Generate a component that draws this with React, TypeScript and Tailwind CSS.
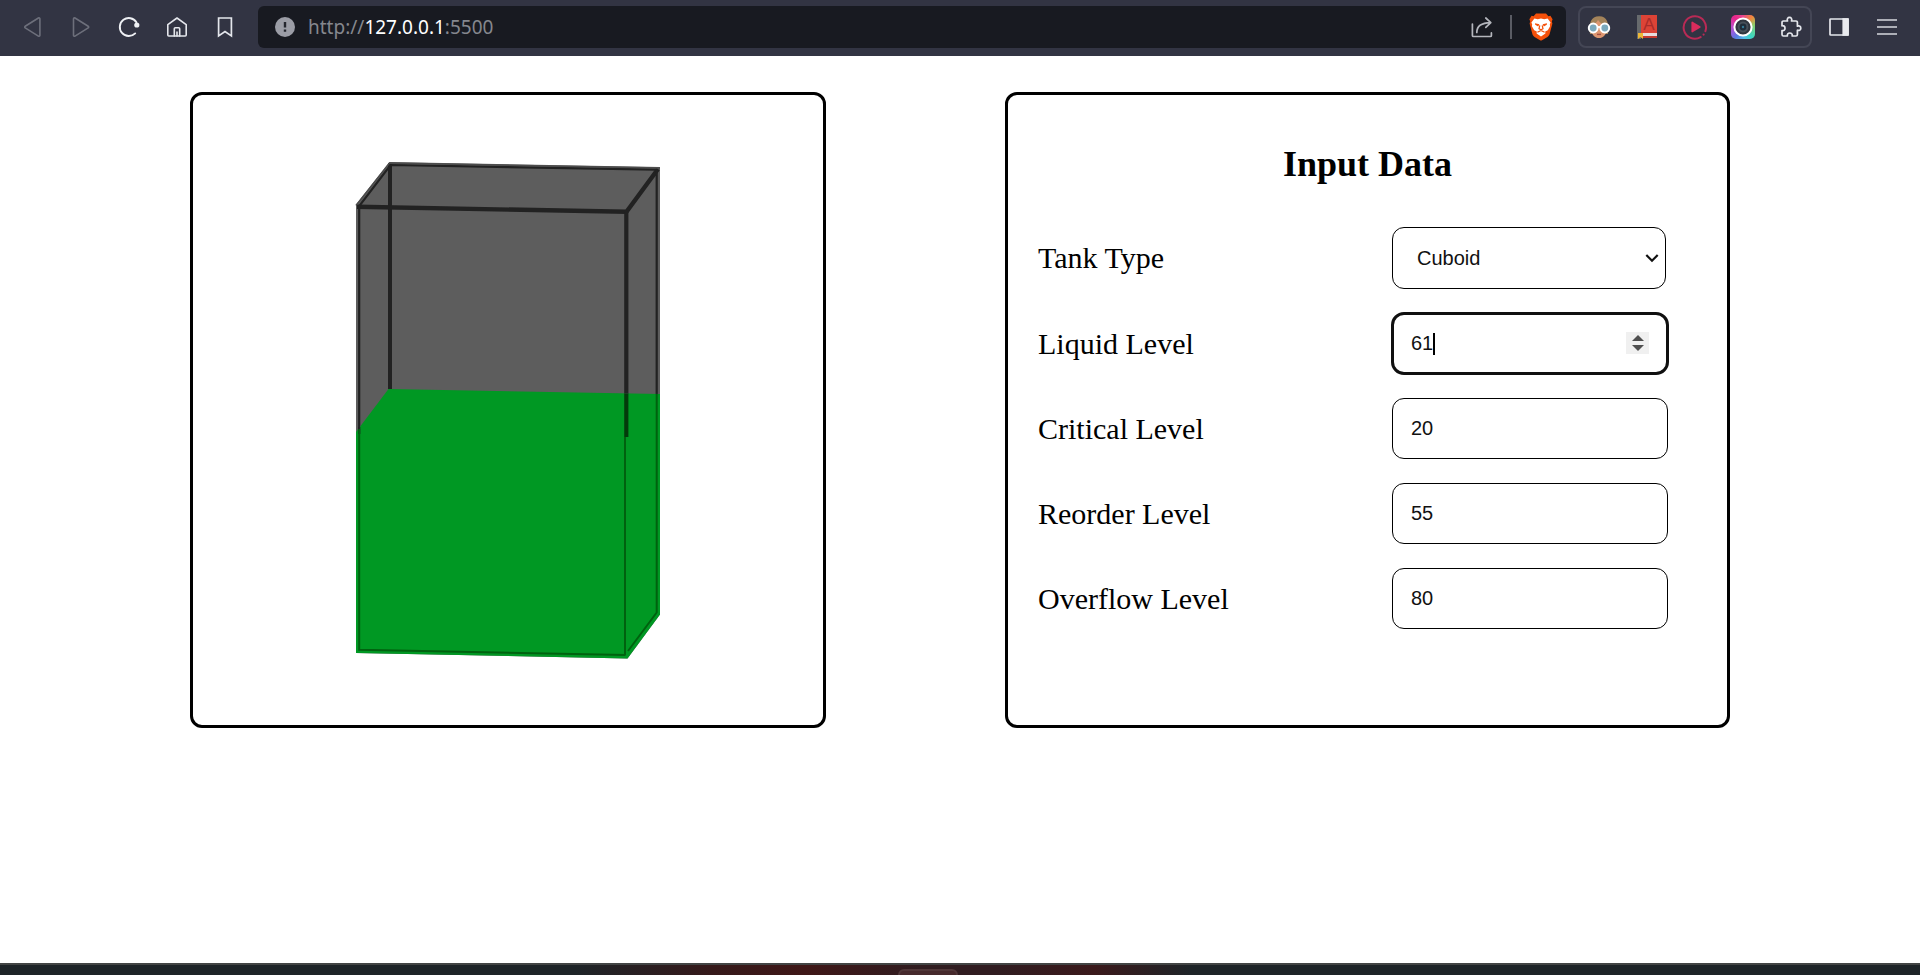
import React, { useState } from "react";

type BarButtonProps = { label: string; children: React.ReactNode };

function BarButton({ label, children }: BarButtonProps) {
  return (
    <button type="button" aria-label={label} className="flex h-12 w-12 shrink-0 items-center justify-center">
      {children}
    </button>
  );
}

const line = {
  width: 24,
  height: 24,
  viewBox: "0 0 24 24",
  fill: "none",
  strokeLinejoin: "round" as const,
  strokeLinecap: "round" as const,
};

function BrowserBar() {
  return (
    <header className="flex h-14 items-center bg-[#323443] pb-0.5 pl-[9px] pr-[9px]">
      <nav className="flex" aria-label="Browser">
        <BarButton label="Back">
          <svg {...line} stroke="#6d6f7b" strokeWidth="1.600">
            <path d="M17.400 3 4.200 11.200a1 1 0 0 0 0 1.700L17.400 21.100a1 1 0 0 0 1.500-.9V3.900a1 1 0 0 0-1.500-.9Z" />
          </svg>
        </BarButton>
        <BarButton label="Forward">
          <svg {...line} stroke="#6d6f7b" strokeWidth="1.600">
            <path d="M6 3 19.200 11.200a1 1 0 0 1 0 1.700L6 21.100a1 1 0 0 1-1.500-.9V3.900A1 1 0 0 1 6 3Z" />
          </svg>
        </BarButton>
        <BarButton label="Reload">
          <svg {...line} stroke="#eef0f4" strokeWidth="1.900">
            <path d="M18.200 18.400A9 9 0 1 1 19.400 7.200" />
            <circle cx="19.800" cy="10" r="2.600" fill="#eef0f4" stroke="none" />
          </svg>
        </BarButton>
        <BarButton label="Home">
          <svg {...line} stroke="#e4e6ec" strokeWidth="1.600">
            <path d="M12 3 2.800 9.600V20a1 1 0 0 0 1 1H20.200a1 1 0 0 0 1-1V9.600Z" />
            <path d="M9.300 21v-7.200a1 1 0 0 1 1-1h3.400a1 1 0 0 1 1 1V21M12 17v4" />
          </svg>
        </BarButton>
        <BarButton label="Bookmark">
          <svg {...line} stroke="#e4e6ec" strokeWidth="1.700">
            <path strokeLinejoin="miter" d="M5.600 3h12.800v18L12 16.600 5.600 21Z" />
          </svg>
        </BarButton>
      </nav>

      <div className="ml-[9px] flex h-[42px] flex-1 items-center rounded-md bg-[#181a21] pl-4 pr-3">
        <svg width="22" height="22" viewBox="0 0 22 22" aria-hidden="true">
          <circle cx="11" cy="11" r="10" fill="#9b9da6" />
          <path d="M11 6v5.600M11 13.600v2.200" stroke="#24262e" strokeWidth="2.400" />
        </svg>
        <p className="ml-3 flex-1 font-['Noto_Sans',sans-serif] text-[19px] leading-6 text-[#85878e]">
          http://<span className="text-white">127.0.0.1</span>:5500
        </p>
        <button type="button" aria-label="Share">
          <svg {...line} stroke="#b4b6bd" strokeWidth="1.700">
            <path d="M2.400 9v11.500a1 1 0 0 0 1 1h17a1 1 0 0 0 1-1v-2.600" />
            <path d="M6.800 17.400C6.800 11.600 11 7.800 20.600 7.600M15.800 3l5 4.600-5 4.800" />
          </svg>
        </button>
        <span className="mx-4 h-6 w-0.5 bg-[#5a5c64]" />
        <button type="button" aria-label="Shields">
          <svg width="26" height="28" viewBox="0 0 26 28">
            <path
              d="M8 .6h10l2.400 2.600 2-.4 2.200 3.400-.8 2.200.6 2-2.700 10.400c-.3 1.300-1.100 2.300-2.200 3.100L14 27.300q-1 .5-2 0l-5.500-3.400c-1.100-.8-1.900-1.800-2.200-3.100L1.600 10.400l.6-2-.8-2.200 2.200-3.400 2 .4Z"
              fill="#f4500a"
            />
            <path
              d="m6.400 5.400 3.400.8 3.200-.8 3.200.8 3.400-.8 3 4.200-.8 1.800.3 1.800-2.300 4-2.600 1.200.2 2-4.400 3-4.400-3 .2-2-2.600-1.200-2.300-4 .3-1.800-.8-1.800Z"
              fill="#fff"
            />
            <path
              d="m7 10.200 4.400 1-1.200 2.200-3-1.600ZM19 10.200l-4.400 1 1.200 2.200 3-1.600Z"
              fill="#f4500a"
            />
            <path
              d="M11.800 12.400 11 15.800l2 1 2-1-.8-3.400M9.400 19.200l3.600-1.800 3.600 1.800"
              fill="none"
              stroke="#f4500a"
              strokeWidth="1.200"
            />
          </svg>
        </button>
      </div>

      <div className="ml-3 flex h-[42px] items-center rounded-lg border-2 border-[#444655]">
        <div className="-mx-[5px] flex">
          <BarButton label="Reading extension">
            <svg width="24" height="24" viewBox="0 0 24 24">
              <path d="M3 19C1.600 8 4 1.400 12 1.200S22.400 8 21 19Z" fill="#a3835a" />
              <path d="M4.400 11C8 9 10 7 11 5c2 3 5 5 8.600 6v3.400c0 5-3.600 8.600-7.600 8.600s-7.600-3.600-7.600-8.600Z" fill="#dc9670" />
              <path d="M10 19.400h4" stroke="#a24e42" strokeWidth="1.400" />
              <circle cx="6.200" cy="13" r="4.400" fill="#7ba9bd" stroke="#fff" strokeWidth="2" />
              <circle cx="17.800" cy="13" r="4.400" fill="#7ba9bd" stroke="#fff" strokeWidth="2" />
              <path d="M10.600 12h2.800" stroke="#fff" strokeWidth="1.800" />
            </svg>
          </BarButton>
          <BarButton label="Dictionary">
            <svg width="24" height="26" viewBox="0 0 24 26">
              <path d="M2 1h4v24H2z" fill="#676a6d" />
              <path d="M6 1h16v18H6z" fill="#dc4336" />
              <path d="M6 19h16v3H6z" fill="#e8dcdc" />
              <path d="M6 22h16v2H6z" fill="#c63a30" />
              <text x="14" y="16" textAnchor="middle" fontSize="17" fontFamily="Liberation Sans, sans-serif" fill="#a82c2a">
                A
              </text>
              <path d="M3 19h5v6l-2.500-2L3 25z" fill="#eeb837" />
            </svg>
          </BarButton>
          <BarButton label="Video player">
            <svg width="26" height="26" viewBox="0 0 26 26">
              <path d="M18.600 23.100A11.200 11.200 0 1 1 23.400 17.200" fill="none" stroke="#b92a55" strokeWidth="2" strokeLinecap="round" />
              <circle cx="21.600" cy="20.600" r="1.100" fill="#b92a55" />
              <path d="M9.400 8.400v9.200a.8.8 0 0 0 1.200.7l7.600-4.600a.8.8 0 0 0 0-1.400l-7.600-4.600a.8.8 0 0 0-1.200.7Z" fill="#d92c5c" />
            </svg>
          </BarButton>
          <BarButton label="Camera">
            <span className="flex h-6 w-6 items-center justify-center rounded-[5px] bg-[conic-gradient(from_0deg,#e8468c_0%,#f0883c_12%,#8ccf6a_22%,#3ed6c0_38%,#4fbfe8_48%,#5a7ae0_60%,#8c62e0_66%,#c24cc8_76%,#e6268c_88%,#e8468c_100%)]">
              <svg width="22" height="22" viewBox="0 0 22 22">
                <circle cx="11" cy="11" r="8.600" fill="#30363f" stroke="#fff" strokeWidth="2" />
                <circle cx="11" cy="11" r="5.400" fill="#46505a" />
                <circle cx="11" cy="11" r="3.400" fill="#1f2c38" />
                <circle cx="11" cy="11" r="1.200" fill="#347896" />
              </svg>
            </span>
          </BarButton>
          <BarButton label="Extensions">
            <svg {...line} stroke="#e4e6ec" strokeWidth="1.700">
              <path d="M3 7.400a1.400 1.400 0 0 1 1.400-1.400H8.500C7.700 3.800 8.900 2.400 10.500 2.400S13.300 3.800 12.500 6H17a1.400 1.400 0 0 1 1.400 1.400v3.800c2-.8 3.400.4 3.400 2s-1.400 2.800-3.400 2v4.400a1.400 1.400 0 0 1-1.400 1.400H13.200c.4-2-.8-3-2.400-3s-2.800 1-2.400 3H4.400A1.400 1.400 0 0 1 3 19.600v-4c2 .4 3-.8 3-2.400s-1-2.800-3-2.400Z" />
            </svg>
          </BarButton>
        </div>
      </div>
      <div className="flex pl-[3px]">
        <BarButton label="Side panel">
          <svg width="22" height="20" viewBox="0 0 22 20">
            <rect x="2" y="2" width="18" height="16" rx="0.600" fill="none" stroke="#e4e6ec" strokeWidth="1.700" />
            <path d="M14.400 1.200H20.800V18.800H14.400z" fill="#e9eaee" />
          </svg>
        </BarButton>
        <BarButton label="Menu">
          <svg width="22" height="18" viewBox="0 0 22 18">
            <path d="M1 2h20M1 9h20M1 16h20" stroke="#d6d8de" strokeWidth="1.600" />
          </svg>
        </BarButton>
      </div>
    </header>
  );
}

function Tank() {
  return (
    <svg viewBox="193 95 630 630" className="block h-auto w-full" role="img" aria-label="Cuboid tank">
      <path d="M356 204.500 389.500 162 660 167V614.500L627.500 658.500 356 653Z" fill="#5d5d5d" />
      <g fill="none" stroke="#222">
        <path d="M390 163V389" strokeWidth="4" />
        <path d="M357 206.700 626.500 211.800 658 169" strokeWidth="4.400" />
        <path d="M359.200 432V206L390.500 165 656.700 169.700V394" strokeWidth="2.200" />
      </g>
      <path d="M356 204.500 389.500 162 660 167" transform="translate(0 1)" fill="none" stroke="#4c4c4c" strokeWidth="1.500" />
      <path d="M356 432 388.500 389 660 394V614.500L627.500 658.500 356 653Z" fill="#009823" />
      <path d="M359.200 427V434" stroke="#222" strokeWidth="2.200" />
      <g fill="none" stroke="#00620f" strokeWidth="2">
        <path d="M359.200 429V649.700L625.500 655" />
        <path d="M625 437V655" />
        <path d="M656.700 394V612.500L628 651" />
      </g>
      <path d="M626.300 393.500V437" stroke="#033b0b" strokeWidth="4.200" />
      <path d="M626.300 212V393.500" stroke="#222" strokeWidth="4.200" />
    </svg>
  );
}

const levels = [
  { id: "liquid", label: "Liquid Level", value: 61 },
  { id: "critical", label: "Critical Level", value: 20 },
  { id: "reorder", label: "Reorder Level", value: 55 },
  { id: "overflow", label: "Overflow Level", value: 80 },
];

function Row({ id, label, children }: { id: string; label: string; children: React.ReactNode }) {
  return (
    <div className="flex items-center justify-between">
      <label htmlFor={id} className="text-[30px] leading-9">
        {label}
      </label>
      <div className="relative w-[276px]">{children}</div>
    </div>
  );
}

function Stepper({ onStep }: { onStep: (delta: number) => void }) {
  return (
    <div className="absolute right-[19px] top-[19px] flex h-[22px] w-[23px] flex-col bg-[#f0f0f0]">
      <button type="button" aria-label="Increase" onClick={() => onStep(1)} className="flex flex-1 items-end justify-center pb-0.5">
        <svg width="12" height="6" viewBox="0 0 12 6">
          <path d="M0 6 6 0l6 6Z" fill="#505050" />
        </svg>
      </button>
      <button type="button" aria-label="Decrease" onClick={() => onStep(-1)} className="flex flex-1 items-start justify-center pt-0.5">
        <svg width="12" height="6" viewBox="0 0 12 6">
          <path d="M0 0h12L6 6Z" fill="#505050" />
        </svg>
      </button>
    </div>
  );
}

function InputPanel() {
  const [type, setType] = useState("Cuboid");
  const [values, setValues] = useState<Record<string, number>>(
    Object.fromEntries(levels.map((l) => [l.id, l.value])),
  );
  const setLevel = (id: string, value: number) => setValues({ ...values, [id]: value });

  return (
    <section className="rounded-xl border-3 border-black pb-8 pl-[30px] pr-[59px] pt-[49px]">
      <h2 className="-mr-[29px] text-center text-4xl font-bold leading-10">Input Data</h2>
      <form className="mt-[43px] flex flex-col gap-6">
        <Row id="type" label="Tank Type">
          <select
            id="type"
            value={type}
            onChange={(e) => setType(e.target.value)}
            className="block h-[62px] w-[274px] appearance-none rounded-xl border border-black bg-white px-6 font-['Liberation_Sans',sans-serif] text-xl text-[#111]"
          >
            <option>Cuboid</option>
            <option>Cylinder</option>
          </select>
          <svg
            width="14"
            height="10"
            viewBox="0 0 14 10"
            aria-hidden="true"
            className="pointer-events-none absolute right-[9px] top-[26px]"
          >
            <path d="M1.300 2 7 7.700 12.700 2" fill="none" stroke="#111" strokeWidth="2.200" />
          </svg>
        </Row>
        {levels.map(({ id, label }) => (
          <Row key={id} id={id} label={label}>
            <input
              id={id}
              type="number"
              value={values[id]}
              onChange={(e) => setLevel(id, Number(e.target.value))}
              className={
                "block h-[61px] w-full rounded-xl border border-black bg-white px-[18px] font-['Liberation_Sans',sans-serif] text-xl text-[#111] [&::-webkit-inner-spin-button]:appearance-none " +
                (id === "liquid" ? "outline-3 -outline-offset-2 outline-[#101010]" : "outline-none")
              }
            />
            {id === "liquid" && (
              <>
                <span className="absolute left-[41px] top-5 h-[22px] w-0.5 bg-black" />
                <Stepper onStep={(delta) => setLevel(id, values[id] + delta)} />
              </>
            )}
          </Row>
        ))}
      </form>
    </section>
  );
}

export default function App() {
  return (
    <div className="flex min-h-screen flex-col bg-white font-['Liberation_Serif',serif] text-black">
      <BrowserBar />
      <main className="mx-auto grid w-full max-w-[1540px] flex-1 grid-cols-[636fr_725fr] content-start gap-[179px] pt-9">
        <section className="rounded-xl border-3 border-black">
          <Tank />
        </section>
        <InputPanel />
      </main>
      <footer className="flex h-3 justify-center overflow-hidden border-t-2 border-[#434545] bg-[linear-gradient(90deg,#1e2428_0%,#1e2428_30%,#35191a_37%,#3f1717_42%,#301c20_48%,#301c20_52%,#3b191b_57%,#1e2428_62%,#1e2428_100%)] pr-16">
        <span className="mt-1 h-4 w-[60px] rounded-md border-2 border-[#503638] bg-[#46292c]" />
      </footer>
    </div>
  );
}
